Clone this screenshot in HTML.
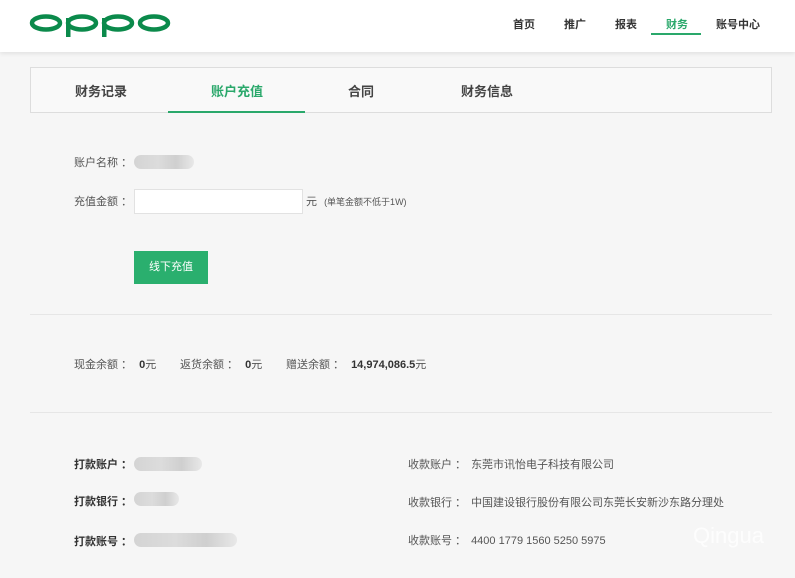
<!DOCTYPE html>
<html><head><meta charset="utf-8"><style>
*{margin:0;padding:0;box-sizing:border-box}
body{width:795px;height:578px;background:#f6f6f6;font-family:"Liberation Sans","Noto Sans CJK SC",sans-serif;position:relative;overflow:hidden;color:#555;font-size:11px}
.hdr{position:absolute;left:0;top:0;width:795px;height:52px;background:#fff;box-shadow:0 2px 4px rgba(0,0,0,.08)}
.nav{position:absolute;top:16px;font-size:11px;color:#333;font-weight:bold}
.a{position:absolute;white-space:nowrap}
.tabs{position:absolute;left:30px;top:67px;width:742px;height:46px;border:1px solid #ddd;background:#f9f9f9}
.tab{position:absolute;top:13px;font-size:13px;color:#444;font-weight:bold}
.blur{position:absolute;height:14px;border-radius:7px;background:linear-gradient(90deg,#d4d4d4,#dcdcdc 40%,#cfcfcf 70%,#e8e8e8)}
.line{position:absolute;left:30px;width:742px;height:1px;background:#e6e6e6}
b{color:#333}
</style></head><body>
<div class="hdr">
<svg style="position:absolute;left:29px;top:12px" width="142" height="26" viewBox="0 0 142 26">
<g fill="none" stroke="#0b8a4b" stroke-width="4.5">
<ellipse cx="17" cy="11" rx="14" ry="6.5"/>
<ellipse cx="53" cy="11" rx="14" ry="6.5"/>
<ellipse cx="89" cy="11" rx="14" ry="6.5"/>
<ellipse cx="125" cy="11" rx="14" ry="6.5"/>
</g>
<rect x="37" y="6" width="4.5" height="19" fill="#0b8a4b"/>
<rect x="73" y="6" width="4.5" height="19" fill="#0b8a4b"/>
</svg>
<div class="nav" style="left:513px">首页</div>
<div class="nav" style="left:564px">推广</div>
<div class="nav" style="left:615px">报表</div>
<div class="nav" style="left:666px;color:#2aa86b">财务</div>
<div style="position:absolute;left:651px;top:33px;width:50px;height:2px;background:#2aa86b"></div>
<div class="nav" style="left:716px">账号中心</div>
</div>
<div class="tabs">
<div class="tab" style="left:44px">财务记录</div>
<div class="tab" style="left:180px;color:#2aa86b">账户充值</div>
<div style="position:absolute;left:137px;top:43px;width:137px;height:2px;background:#2aa86b"></div>
<div class="tab" style="left:317px">合同</div>
<div class="tab" style="left:430px">财务信息</div>
</div>
<div class="a" style="left:74px;top:154px">账户名称 ：</div>
<div class="blur" style="left:134px;top:155px;width:60px"></div>
<div class="a" style="left:74px;top:193px">充值金额 ：</div>
<div style="position:absolute;left:134px;top:189px;width:169px;height:25px;background:#fff;border:1px solid #e2e2e2"></div>
<div class="a" style="left:306px;top:193px">元 <span style="font-size:9px;margin-left:4px">(单笔金额不低于1W)</span></div>
<div style="position:absolute;left:134px;top:251px;width:74px;height:33px;background:#2aaf6e;color:#fff;font-size:11px;text-align:center;line-height:32px">线下充值</div>
<div class="line" style="top:314px"></div>
<div class="a" style="left:74px;top:356px">现金余额 ：<b style="margin-left:7px">0</b>元</div>
<div class="a" style="left:180px;top:356px">返货余额 ：<b style="margin-left:7px">0</b>元</div>
<div class="a" style="left:286px;top:356px">赠送余额 ：<b style="margin-left:7px">14,974,086.5</b>元</div>
<div class="line" style="top:412px"></div>
<div class="a" style="left:74px;top:456px;color:#333;font-weight:bold">打款账户 ：</div>
<div class="blur" style="left:134px;top:457px;width:68px"></div>
<div class="a" style="left:74px;top:493px;color:#333;font-weight:bold">打款银行 ：</div>
<div class="blur" style="left:134px;top:492px;width:45px"></div>
<div class="a" style="left:74px;top:533px;color:#333;font-weight:bold">打款账号 ：</div>
<div class="blur" style="left:134px;top:533px;width:103px"></div>
<div class="a" style="left:408px;top:456px">收款账户 ：<span style="margin-left:5px">东莞市讯怡电子科技有限公司</span></div>
<div class="a" style="left:408px;top:494px">收款银行 ：<span style="margin-left:5px">中国建设银行股份有限公司东莞长安新沙东路分理处</span></div>
<div class="a" style="left:408px;top:532px">收款账号 ：<span style="margin-left:5px">4400 1779 1560 5250 5975</span></div>
<div class="a" style="left:693px;top:523px;font-size:22px;color:#fff;opacity:.8">Qingua</div>
</body></html>
